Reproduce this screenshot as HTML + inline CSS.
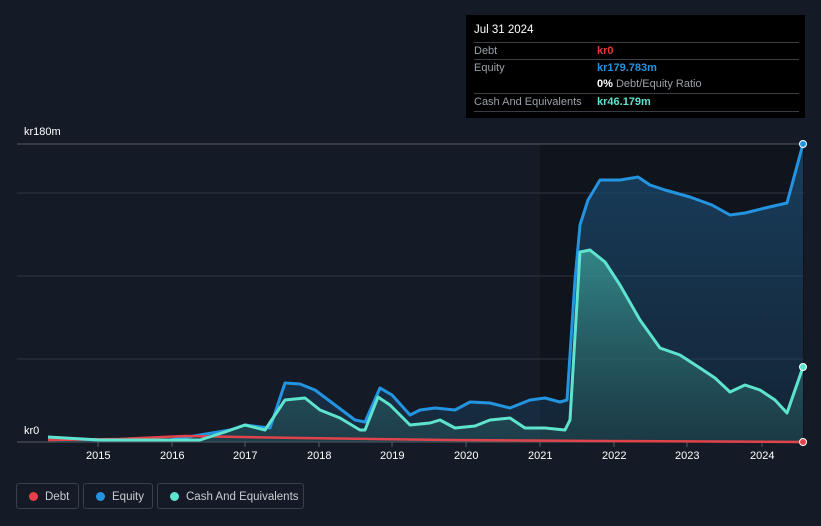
<!DOCTYPE html>
<html><head><meta charset="utf-8"><style>
body{margin:0;width:821px;height:526px;background:#151b26;font-family:"Liberation Sans",sans-serif;overflow:hidden;position:relative}
.tt{position:absolute;left:466px;top:15px;width:339px;height:103px;background:#000;color:#fff;font-size:11px}
.tt .r{position:absolute;left:8px;right:6px;border-top:1px solid #3a3d44;height:17px}
.g{color:#9aa0a8}
.lg{position:absolute;top:483px;height:26px;border:1px solid #3a4048;border-radius:3px;color:#c8ccd2;font-size:11.5px;line-height:26px;box-sizing:border-box;white-space:nowrap}
.lg i{position:absolute;left:12px;top:8px;width:9px;height:9px;border-radius:50%}
.ax{position:absolute;color:#fff;font-size:11px}
</style></head><body>
<svg width="821" height="526" style="position:absolute;left:0;top:0">
<defs>
<linearGradient id="eq" x1="0" y1="0" x2="0" y2="1"><stop offset="0" stop-color="#1b4a70" stop-opacity=".75"/><stop offset="1" stop-color="#1b4a70" stop-opacity=".3"/></linearGradient>
<linearGradient id="ca" x1="0" y1="0" x2="0" y2="1"><stop offset="0" stop-color="#3fa89c" stop-opacity=".7"/><stop offset="1" stop-color="#2d6b6a" stop-opacity=".3"/></linearGradient>
</defs>
<rect x="540" y="144" width="264" height="298" fill="#10141c"/>
<g stroke="#2e3440" stroke-width="1"><line x1="17" y1="144" x2="804" y2="144" stroke="#555a62"/><line x1="17" y1="193" x2="804" y2="193"/><line x1="17" y1="276" x2="804" y2="276"/><line x1="17" y1="359" x2="804" y2="359"/><line x1="17" y1="442" x2="804" y2="442" stroke="#555a62"/></g>
<g stroke="#555a62"><line x1="98" y1="442" x2="98" y2="447"/><line x1="172" y1="442" x2="172" y2="447"/><line x1="245" y1="442" x2="245" y2="447"/><line x1="319" y1="442" x2="319" y2="447"/><line x1="392" y1="442" x2="392" y2="447"/><line x1="466" y1="442" x2="466" y2="447"/><line x1="540" y1="442" x2="540" y2="447"/><line x1="614" y1="442" x2="614" y2="447"/><line x1="687" y1="442" x2="687" y2="447"/><line x1="762" y1="442" x2="762" y2="447"/></g>
<path d="M48,438 L100,440 L170,440 L230,430 L245,425 L270,428 L285,383 L300,384 L315,390 L335,405 L355,420 L365,422 L380,388 L392,395 L410,415 L420,410 L435,408 L455,410 L470,402 L490,403 L510,408 L530,400 L545,398 L560,402 L567,400 L575,280 L580,225 L588,200 L600,180 L620,180 L638,177 L650,185 L665,190 L690,197 L712,205 L730,215 L745,213 L765,208 L787,203 L803,144 L803,442 L48,442Z" fill="url(#eq)"/>
<path d="M48,437 L100,440 L200,440 L225,432 L245,425 L265,430 L285,400 L305,398 L320,410 L340,418 L360,430 L365,430 L378,397 L390,405 L410,425 L430,423 L440,420 L455,428 L475,426 L490,420 L510,418 L525,428 L545,428 L565,430 L570,420 L580,252 L590,250 L605,262 L620,285 L640,320 L660,348 L680,355 L700,368 L715,378 L730,392 L745,385 L760,390 L775,400 L787,413 L803,367 L803,442 L48,442Z" fill="url(#ca)"/>
<path d="M48,438 L100,440 L170,440 L230,430 L245,425 L270,428 L285,383 L300,384 L315,390 L335,405 L355,420 L365,422 L380,388 L392,395 L410,415 L420,410 L435,408 L455,410 L470,402 L490,403 L510,408 L530,400 L545,398 L560,402 L567,400 L575,280 L580,225 L588,200 L600,180 L620,180 L638,177 L650,185 L665,190 L690,197 L712,205 L730,215 L745,213 L765,208 L787,203 L803,144" fill="none" stroke="#2394e0" stroke-width="3" stroke-linejoin="round"/>
<path d="M48,440 L120,439 L185,436 L300,438 L450,440 L600,441 L803,442" fill="none" stroke="#e0444a" stroke-width="2.5"/>
<path d="M48,437 L100,440 L200,440 L225,432 L245,425 L265,430 L285,400 L305,398 L320,410 L340,418 L360,430 L365,430 L378,397 L390,405 L410,425 L430,423 L440,420 L455,428 L475,426 L490,420 L510,418 L525,428 L545,428 L565,430 L570,420 L580,252 L590,250 L605,262 L620,285 L640,320 L660,348 L680,355 L700,368 L715,378 L730,392 L745,385 L760,390 L775,400 L787,413 L803,367" fill="none" stroke="#5ee3cf" stroke-width="3" stroke-linejoin="round"/>
<circle cx="803" cy="144" r="3.5" fill="#2394e0" stroke="#fff" stroke-width="1"/>
<circle cx="803" cy="367" r="3.5" fill="#5ee3cf" stroke="#fff" stroke-width="1"/>
<circle cx="803" cy="442" r="3.5" fill="#e0444a" stroke="#fff" stroke-width="1"/>
</svg>
<div class="ax" style="left:24px;top:126px">kr180m</div>
<div class="ax" style="left:24px;top:425px">kr0</div>
<div class="ax" style="left:86px;top:450px">2015</div><div class="ax" style="left:160px;top:450px">2016</div><div class="ax" style="left:233px;top:450px">2017</div><div class="ax" style="left:307px;top:450px">2018</div><div class="ax" style="left:380px;top:450px">2019</div><div class="ax" style="left:454px;top:450px">2020</div><div class="ax" style="left:528px;top:450px">2021</div><div class="ax" style="left:602px;top:450px">2022</div><div class="ax" style="left:675px;top:450px">2023</div><div class="ax" style="left:750px;top:450px">2024</div>
<div class="tt">
<div style="position:absolute;left:8px;top:9px;font-size:11.5px">Jul 31 2024</div>
<div class="r" style="top:27px"><span class="g" style="position:absolute;left:0;top:2px">Debt</span><span style="position:absolute;left:123px;top:2px;color:#e8363c;font-weight:bold">kr0</span></div>
<div class="r" style="top:44px"><span class="g" style="position:absolute;left:0;top:2px">Equity</span><span style="position:absolute;left:123px;top:2px;color:#2394e0;font-weight:bold">kr179.783m</span></div>
<div style="position:absolute;left:131px;top:63px"><b>0%</b> <span class="g">Debt/Equity Ratio</span></div>
<div class="r" style="top:78px"><span class="g" style="position:absolute;left:0;top:2px">Cash And Equivalents</span><span style="position:absolute;left:123px;top:2px;color:#5ee3cf;font-weight:bold">kr46.179m</span></div>
<div class="r" style="top:96px;height:0"></div>
</div>
<div class="lg" style="left:16px;width:63px"><i style="background:#e8404a"></i><span style="position:absolute;left:28px">Debt</span></div>
<div class="lg" style="left:83px;width:70px"><i style="background:#2394e0"></i><span style="position:absolute;left:28px">Equity</span></div>
<div class="lg" style="left:157px;width:147px"><i style="background:#5ee3cf"></i><span style="position:absolute;left:28px">Cash And Equivalents</span></div>
</body></html>
